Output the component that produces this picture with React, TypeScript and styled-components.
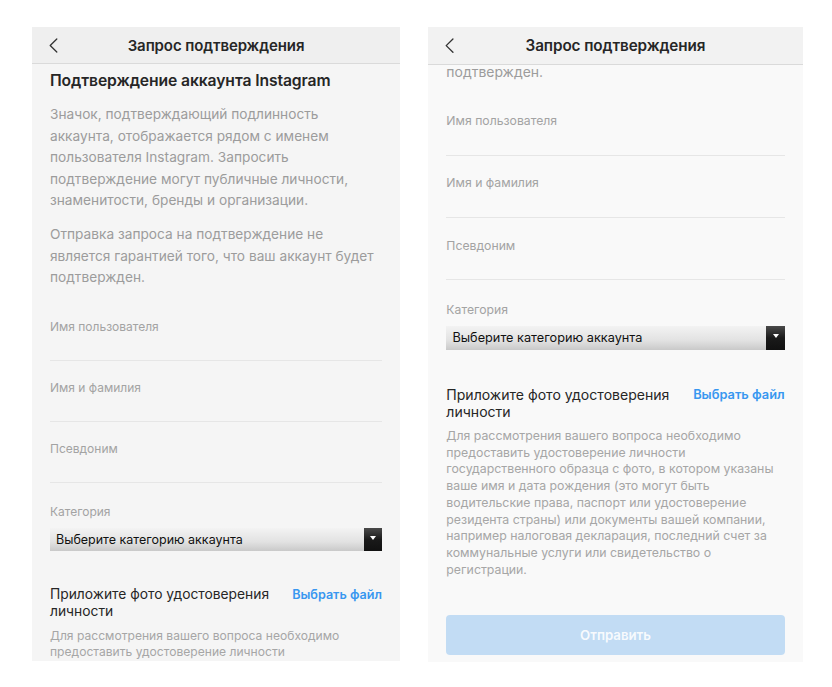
import React from 'react';
import styled, { createGlobalStyle } from 'styled-components';

const s = (n: number) => `calc(${n}px * var(--s))`;

const Global = createGlobalStyle`
  html, body { margin: 0; padding: 0; background: #ffffff; }
  body {
    font-family: Inter, "Liberation Sans", Arial, sans-serif;
    -webkit-font-smoothing: antialiased;
  }
`;

const Page = styled.div`
  display: flex;
  align-items: flex-start;
  gap: 28px;
  padding: 27px 0 0 32px;
`;

const Screen = styled.section<{ $w: number; $h: number; $scale: number; $bg: string }>`
  --s: ${(p) => p.$scale};
  width: ${(p) => p.$w}px;
  height: ${(p) => p.$h}px;
  background: ${(p) => p.$bg};
  display: flex;
  flex-direction: column;
  overflow: hidden;
`;

const Header = styled.header<{ $bg: string }>`
  flex: none;
  height: ${s(36)};
  display: grid;
  grid-template-columns: ${s(44)} 1fr ${s(44)};
  align-items: center;
  background: ${(p) => p.$bg};
  border-bottom: 1px solid #dadada;
`;

const BackButton = styled.button`
  display: flex;
  align-items: center;
  padding: 0 0 0 ${s(17)};
  border: 0;
  background: none;
  height: 100%;
  color: #333;
  svg {
    width: ${s(9)};
    height: ${s(15)};
  }
`;

const Title = styled.h1`
  margin: 0;
  text-align: center;
  font-size: ${s(15)};
  font-weight: 600;
  color: #262626;
  letter-spacing: -0.1px;
`;

const Spacer = styled.div``;

const Body = styled.div<{ $anchor: 'top' | 'bottom' }>`
  flex: 1;
  min-height: 0;
  overflow: hidden;
  display: flex;
  flex-direction: column;
  justify-content: ${(p) => (p.$anchor === 'bottom' ? 'flex-end' : 'flex-start')};
`;

const Content = styled.div`
  flex: none;
  padding: ${s(7)} ${s(18)} ${s(7)};
`;

const Heading = styled.h2`
  margin: 0;
  font-size: ${s(15.7)};
  line-height: ${s(20)};
  font-weight: 600;
  color: #262626;
  letter-spacing: -0.1px;
`;

const Para = styled.p<{ $gap: number }>`
  margin: ${(p) => s(p.$gap)} 0 0;
  font-size: ${s(13.7)};
  line-height: ${s(21.5)};
  color: #9c9c9c;
`;

const Line = styled.span`
  display: block;
  white-space: nowrap;
`;

const Fields = styled.div`
  margin-top: ${s(11)};
`;

const Field = styled.div`
  padding-top: ${s(19)};
  border-bottom: 1px solid #e6e6e6;
`;

const FieldLabel = styled.div`
  font-size: ${s(12)};
  line-height: ${s(16)};
  color: #a3a3a3;
  margin-bottom: ${s(25)};
`;

const Category = styled.div`
  margin-top: ${s(21)};
`;

const CategoryLabel = styled.div`
  font-size: ${s(12)};
  line-height: ${s(16)};
  color: #a3a3a3;
  margin-bottom: ${s(8)};
`;

const Select = styled.div`
  display: flex;
  align-items: center;
  height: ${s(23)};
  padding-left: ${s(6)};
  background: linear-gradient(#f3f3f3, #e2e2e2 60%, #c9c9c9);
  font-size: ${s(12.5)};
  color: #111;
`;

const SelectArrow = styled.span`
  margin-left: auto;
  align-self: stretch;
  width: ${s(18)};
  display: flex;
  align-items: center;
  justify-content: center;
  padding-bottom: ${s(3)};
  box-sizing: border-box;
  background: linear-gradient(#4a4a4a, #1a1a1a 50%, #111);
  &::after {
    content: '';
    width: 0;
    height: 0;
    border-left: ${s(3)} solid transparent;
    border-right: ${s(3)} solid transparent;
    border-top: ${s(4.5)} solid #fff;
  }
`;

const AttachRow = styled.div`
  margin-top: ${s(35.5)};
  display: flex;
  justify-content: space-between;
  align-items: flex-start;
`;

const AttachTitle = styled.div`
  font-size: ${s(13.8)};
  line-height: ${s(17)};
  color: #262626;
`;

const PickFile = styled.button`
  border: 0;
  background: none;
  padding: 0;
  font-family: inherit;
  font-size: ${s(12.6)};
  line-height: ${s(17)};
  font-weight: 600;
  color: #3897f0;
`;

const Note = styled.p`
  margin: ${s(7.5)} 0 0;
  font-size: ${s(12.1)};
  line-height: ${s(16.4)};
  color: #a6a6a6;
`;

const Submit = styled.button`
  margin-top: ${s(36)};
  width: 100%;
  height: ${s(39)};
  border: 0;
  border-radius: ${s(4)};
  background: #c2dcf4;
  color: rgba(255, 255, 255, 0.9);
  font-family: inherit;
  font-size: ${s(13)};
  font-weight: 600;
  display: flex;
  align-items: center;
  justify-content: center;
`;

const para1 = [
  'Значок, подтверждающий подлинность',
  'аккаунта, отображается рядом с именем',
  'пользователя Instagram. Запросить',
  'подтверждение могут публичные личности,',
  'знаменитости, бренды и организации.',
];

const para2 = [
  'Отправка запроса на подтверждение не',
  'является гарантией того, что ваш аккаунт будет',
  'подтвержден.',
];

const note = [
  'Для рассмотрения вашего вопроса необходимо',
  'предоставить удостоверение личности',
  'государственного образца с фото, в котором указаны',
  'ваше имя и дата рождения (это могут быть',
  'водительские права, паспорт или удостоверение',
  'резидента страны) или документы вашей компании,',
  'например налоговая декларация, последний счет за',
  'коммунальные услуги или свидетельство о',
  'регистрации.',
];

const fields = ['Имя пользователя', 'Имя и фамилия', 'Псевдоним'];

const Chevron = () => (
  <svg viewBox="0 0 9 15" fill="none" stroke="currentColor" strokeWidth="1.3" strokeLinecap="round" strokeLinejoin="round">
    <polyline points="7.8,1 1.2,7.5 7.8,14" />
  </svg>
);

type ScreenProps = {
  w: number;
  h: number;
  scale: number;
  bg: string;
  headerBg: string;
  anchor: 'top' | 'bottom';
};

const VerificationScreen = ({ w, h, scale, bg, headerBg, anchor }: ScreenProps) => (
  <Screen $w={w} $h={h} $scale={scale} $bg={bg}>
    <Header $bg={headerBg}>
      <BackButton aria-label="Назад">
        <Chevron />
      </BackButton>
      <Title>Запрос подтверждения</Title>
      <Spacer />
    </Header>
    <Body $anchor={anchor}>
      <Content>
        <Heading>Подтверждение аккаунта Instagram</Heading>
        <Para $gap={13}>
          {para1.map((l) => (
            <Line key={l}>{l}</Line>
          ))}
        </Para>
        <Para $gap={12.5}>
          {para2.map((l) => (
            <Line key={l}>{l}</Line>
          ))}
        </Para>
        <Fields>
          {fields.map((f) => (
            <Field key={f}>
              <FieldLabel>{f}</FieldLabel>
            </Field>
          ))}
        </Fields>
        <Category>
          <CategoryLabel>Категория</CategoryLabel>
          <Select>
            Выберите категорию аккаунта
            <SelectArrow />
          </Select>
        </Category>
        <AttachRow>
          <AttachTitle>
            <Line>Приложите фото удостоверения</Line>
            <Line>личности</Line>
          </AttachTitle>
          <PickFile>Выбрать файл</PickFile>
        </AttachRow>
        <Note>
          {note.map((l) => (
            <Line key={l}>{l}</Line>
          ))}
        </Note>
        <Submit>Отправить</Submit>
      </Content>
    </Body>
  </Screen>
);

export default function App() {
  return (
    <>
      <Global />
      <Page>
        <VerificationScreen w={368} h={634} scale={1} bg="#f5f5f5" headerBg="#efefef" anchor="top" />
        <VerificationScreen w={375} h={635} scale={1.019} bg="#f9f9f9" headerBg="#f2f2f2" anchor="bottom" />
      </Page>
    </>
  );
}
